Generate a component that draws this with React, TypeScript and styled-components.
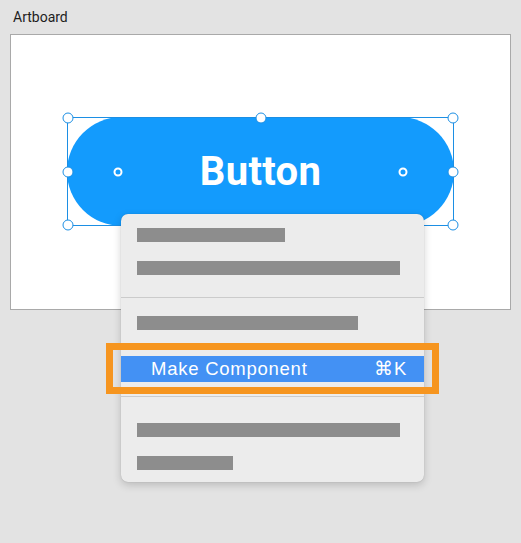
import styled, { createGlobalStyle } from 'styled-components';

const GlobalStyle = createGlobalStyle`
  body {
    margin: 0;
    background: #e3e3e3;
    font-family: Roboto, "Liberation Sans", sans-serif;
  }
`;

const Canvas = styled.div`
  position: relative;
  box-sizing: border-box;
  height: 543px;
  padding: 8px 10px;
`;

const Label = styled.div`
  margin: 0 0 8px 3px;
  font-size: 14px;
  line-height: 18px;
  color: #1e1e1e;
`;

const Artboard = styled.div`
  box-sizing: border-box;
  width: 501px;
  height: 276px;
  border: 1px solid #a9a9a9;
  background: #fff;
  display: flex;
  justify-content: center;
  padding-top: 82px;
`;

const ButtonFrame = styled.div`
  position: relative;
  width: 387px;
  height: 109px;
`;

const Pill = styled.div`
  height: 100%;
  border-radius: 55px;
  background: #139bfd;
  color: #fff;
  font-size: 40px;
  font-weight: 700;
  display: flex;
  align-items: center;
  justify-content: center;
  letter-spacing: 0.3px;
`;

const Selection = styled.div`
  position: absolute;
  inset: 0;
  border: 1px solid #1c8fe4;
`;

const Handle = styled.span<{ $x: number; $y: number }>`
  position: absolute;
  left: ${p => p.$x}%;
  top: ${p => p.$y}%;
  box-sizing: border-box;
  width: 11px;
  height: 11px;
  border: 1.5px solid #1c8fe4;
  border-radius: 50%;
  background: #fff;
  transform: translate(-50%, -50%);
`;

// corner-radius knobs, sit inside the pill
const RadiusKnob = styled.span<{ $side: 'left' | 'right' }>`
  position: absolute;
  top: 50%;
  ${p => p.$side}: 51px;
  width: 5px;
  height: 5px;
  border: 2px solid #fff;
  border-radius: 50%;
  background: #139bfd;
  transform: translate(${p => (p.$side === 'left' ? '-50%' : '50%')}, -50%);
`;

const Menu = styled.div`
  position: absolute;
  left: 121px;
  top: 214px;
  width: 303px;
  border-radius: 7px;
  background: #ececec;
  box-shadow: 0 0 1px rgba(0, 0, 0, 0.25), 0 3px 8px rgba(0, 0, 0, 0.18);
  display: flex;
  flex-direction: column;
`;

const Section = styled.div<{ $pad: string; $gap: number }>`
  display: flex;
  flex-direction: column;
  gap: ${p => p.$gap}px;
  padding: ${p => p.$pad};
`;

const Bar = styled.div<{ $w: number }>`
  width: ${p => p.$w}px;
  height: 14px;
  margin-left: 16px;
  background: #8d8d8d;
`;

const Divider = styled.div`
  height: 1px;
  background: #cbcbcb;
`;

const Row = styled.div`
  position: relative;
  height: 26px;
  display: flex;
  align-items: center;
  justify-content: space-between;
  padding: 0 17px 0 30px;
  background: #4391f4;
  color: #fff;
  font-family: "Liberation Sans", Arial, sans-serif;
  font-size: 18.5px;
  letter-spacing: 0.75px;
`;

const Callout = styled.div`
  position: absolute;
  top: -13px;
  bottom: -12px;
  left: -15px;
  right: -15px;
  border: 7px solid #f6951f;
`;

const handles = [
  [0, 0], [50, 0], [100, 0],
  [0, 50], [100, 50],
  [0, 100], [50, 100], [100, 100],
];

export default function App() {
  return (
    <Canvas>
      <GlobalStyle />
      <Label>Artboard</Label>
      <Artboard>
        <ButtonFrame>
          <Pill>Button</Pill>
          <RadiusKnob $side="left" />
          <RadiusKnob $side="right" />
          <Selection>
            {handles.map(([x, y]) => (
              <Handle key={`${x}-${y}`} $x={x} $y={y} />
            ))}
          </Selection>
        </ButtonFrame>
      </Artboard>

      <Menu>
        <Section $pad="14px 0 22px" $gap={19}>
          <Bar $w={148} />
          <Bar $w={263} />
        </Section>
        <Divider />
        <Section $pad="18px 0 14px" $gap={26}>
          <Bar $w={221} />
          <Row>
            <span>Make Component</span>
            <span>⌘K</span>
            <Callout />
          </Row>
        </Section>
        <Divider />
        <Section $pad="26px 0 12px" $gap={19}>
          <Bar $w={263} />
          <Bar $w={96} />
        </Section>
      </Menu>
    </Canvas>
  );
}
